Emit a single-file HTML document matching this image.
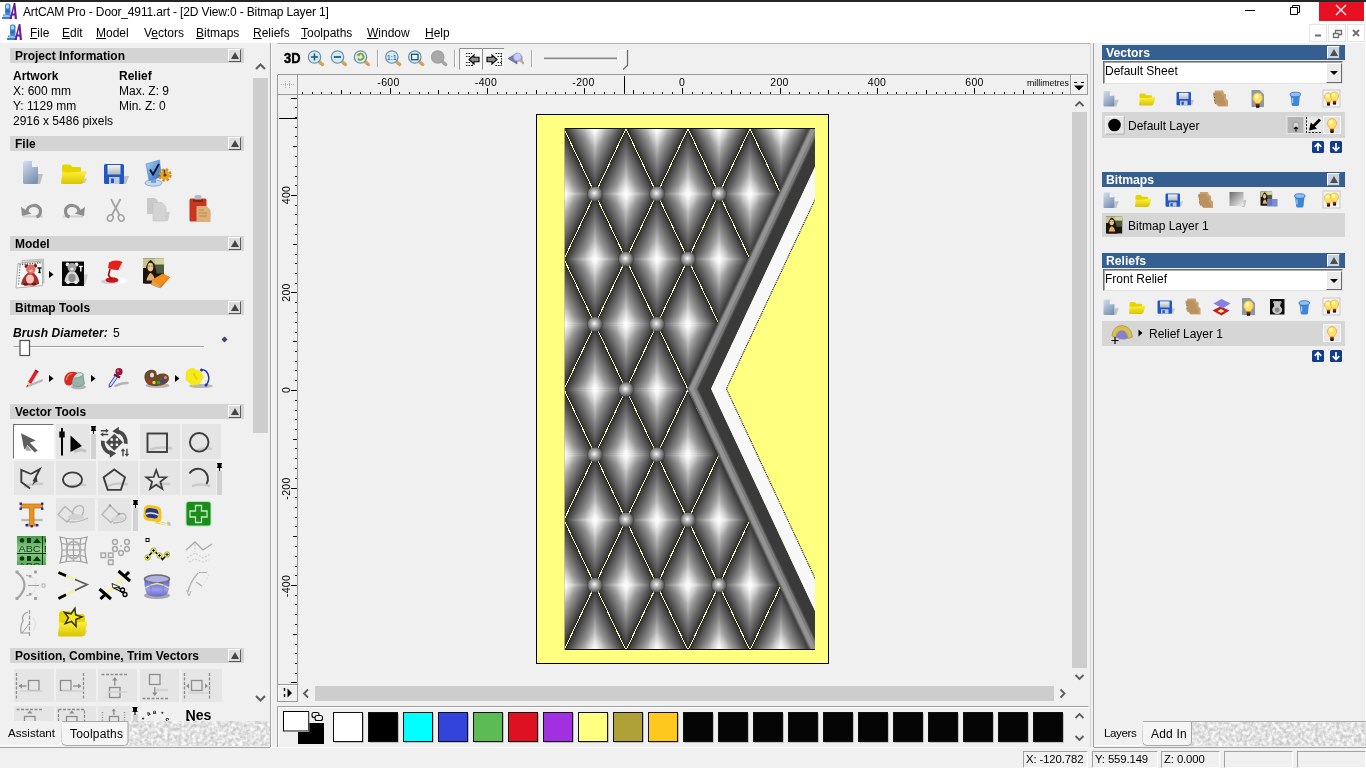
<!DOCTYPE html>
<html lang="en">
<head>
<meta charset="utf-8">
<title>ArtCAM Pro - Door_4911.art</title>
<style>
*{box-sizing:border-box;margin:0;padding:0}
html,body{width:1366px;height:768px;overflow:hidden;background:#f0f0f0}
body{position:relative;font-family:"Liberation Sans",sans-serif;font-size:12px;color:#000;line-height:1}
.a{position:absolute}
.t{position:absolute;white-space:nowrap;line-height:14px;will-change:transform}
.b{font-weight:bold}
svg{position:absolute;overflow:visible;will-change:transform}
.hdr,.rh,.dd,.sb{will-change:transform}
u{text-decoration-thickness:1px;text-underline-offset:1px}
.hdr{position:absolute;left:10px;width:234px;height:15px;background:#d4d4d4;font-weight:bold;font-size:12px;line-height:15px;padding:1px 0 0 5px;white-space:nowrap}
.hdr i{position:absolute;left:218px;top:1px;width:13px;height:13px;background:#dcdcdc;border:1px solid;border-color:#fff #5a5a5a #5a5a5a #fff}
.hdr i:after{content:"";position:absolute;left:1.500px;top:2px;border:4px solid transparent;border-top:0;border-bottom:7px solid #454545}
.c{position:absolute;background:#e5e5e5}
.rh{position:absolute;left:1102px;width:243px;height:15px;background:#365f91;color:#fff;font-weight:bold;font-size:12.200px;line-height:15px;padding:1px 0 0 4px;white-space:nowrap}
.rh i{position:absolute;left:225px;top:1px;width:13px;height:13px;background:#c9d3df;border:1px solid;border-color:#fff #5a6a80 #5a6a80 #fff}
.rh i:after{content:"";position:absolute;left:1.500px;top:2px;border:4px solid transparent;border-top:0;border-bottom:7px solid #4a5058}
.dd{position:absolute;left:1103px;width:240px;height:23px;background:#fff;border:1px solid;border-color:#6f6f6f #e2e2e2 #e2e2e2 #6f6f6f;box-shadow:inset 1px 1px 0 #a8a8a8;font-size:12px;line-height:14px;padding:2px 0 0 1px;white-space:nowrap}
.dd i{position:absolute;right:0px;top:1px;width:16px;height:20px;background:#ececec;border:1px solid;border-color:#fff #6a6a6a #6a6a6a #fff}
.dd i:after{content:"";position:absolute;left:3px;top:7px;border:4px solid transparent;border-bottom:0;border-top:4.500px solid #000}
.row{position:absolute;left:1102px;width:243px;background:#d6d6d6;font-size:12px;white-space:nowrap}
.sb{position:absolute;top:751px;height:17px;border:1px solid;border-color:#a2a2a2 #fff #fff #a2a2a2;font-size:11.300px;line-height:15px;padding-left:2px;white-space:nowrap;letter-spacing:-.1px}

</style>
</head>
<body>

<!-- p_base -->
<div class="a" style="left:0;top:0;width:1366px;height:43px;background:#fff"></div>
<div class="a" style="left:0;top:0;width:1366px;height:2px;background:#262626"></div>
<div class="t" style="left:23px;top:5px;font-size:12px;letter-spacing:-0.14px">ArtCAM Pro - Door_4911.art - [2D View:0 - Bitmap Layer 1]</div>
<svg style="left:2.3px;top:3.2px" width="15" height="16" viewBox="0 0 15 16">
<rect x="3" y="0.500" width="5.500" height="11.500" rx="2" fill="#3f86d6"/><rect x="4" y="1.500" width="3" height="4" rx="1.200" fill="#a8dcf4"/><rect x="4" y="6.500" width="3.500" height="3" fill="#2b6cc0"/>
<path d="M1 11.500h8.500v2H1zM0 14h10v2H0z" fill="#3a80d0"/><path d="M1.500 12.500h6" stroke="#9fd0f0" stroke-width=".8"/>
<path d="M7.600 16L11.800 0h1.600L15 16h-2.200l-.3 -3.500h-2.200L9.600 16z" fill="#6a1a90"/><path d="M10.700 10.500h1.700L12 5z" fill="#fff"/>
</svg><svg style="left:7.4px;top:24px" width="15" height="16" viewBox="0 0 15 16">
<rect x="3" y="0.500" width="5.500" height="11.500" rx="2" fill="#3f86d6"/><rect x="4" y="1.500" width="3" height="4" rx="1.200" fill="#a8dcf4"/><rect x="4" y="6.500" width="3.500" height="3" fill="#2b6cc0"/>
<path d="M1 11.500h8.500v2H1zM0 14h10v2H0z" fill="#3a80d0"/><path d="M1.500 12.500h6" stroke="#9fd0f0" stroke-width=".8"/>
<path d="M7.600 16L11.800 0h1.600L15 16h-2.200l-.3 -3.500h-2.200L9.600 16z" fill="#6a1a90"/><path d="M10.700 10.500h1.700L12 5z" fill="#fff"/>
</svg><div class="t" style="left:30px;top:26px"><u>F</u>ile</div>
<div class="t" style="left:62px;top:26px"><u>E</u>dit</div>
<div class="t" style="left:96px;top:26px"><u>M</u>odel</div>
<div class="t" style="left:144px;top:26px">V<u>e</u>ctors</div>
<div class="t" style="left:196px;top:26px"><u>B</u>itmaps</div>
<div class="t" style="left:253px;top:26px"><u>R</u>eliefs</div>
<div class="t" style="left:301px;top:26px"><u>T</u>oolpaths</div>
<div class="t" style="left:367px;top:26px"><u>W</u>indow</div>
<div class="t" style="left:425px;top:26px"><u>H</u>elp</div>
<div class="a" style="left:1319px;top:2px;width:45px;height:19px;background:#e81123"></div>
<svg style="left:1240px;top:2px" width="126" height="20" viewBox="0 0 126 20">
<path d="M5 8.5h10" stroke="#000" stroke-width="1"/>
<path d="M50.5 5.5h7v7h-7z M52.500 5.5v-2h7v7h-2" fill="none" stroke="#000" stroke-width="1"/>
<path d="M96 3l10 10M106 3l-10 10" stroke="#fff" stroke-width="1.2"/>
</svg>
<svg style="left:1309px;top:24px" width="56" height="18" viewBox="0 0 56 18">
<g fill="none" stroke="#e4e4e4"><rect x=".5" y=".5" width="17" height="17"/><rect x="19.5" y=".5" width="17" height="17"/><rect x="38.5" y=".5" width="17" height="17"/></g>
<path d="M6 11.500h6" stroke="#6d6d6d" stroke-width="2"/>
<path d="M24.500 9.500h5v4h-5zM26.500 9v-2.500h6v4h-2.500" fill="none" stroke="#6d6d6d" stroke-width="1.3"/>
<path d="M44 6l6 6M50 6l-6 6" stroke="#6d6d6d" stroke-width="1.8"/>
</svg>
<div class="a" style="left:1365px;top:43px;width:1px;height:725px;background:#fff"></div>
<!-- p_center -->
<div class="a" style="left:270px;top:43px;width:1px;height:704px;background:#a3a3a3"></div>
<div class="a" style="left:271px;top:43px;width:1px;height:704px;background:#fbfbfb"></div>
<div class="a" style="left:277px;top:43px;width:814px;height:1px;background:#b4b4b4"></div>
<div class="a" style="left:1090px;top:43px;width:1px;height:704px;background:#d4d4d4"></div>
<div class="a" style="left:1093px;top:43px;width:1px;height:704px;background:#a3a3a3"></div>
<div class="a" style="left:270px;top:747px;width:824px;height:1px;background:#fafafa"></div>
<svg style="left:0;top:0" width="1366" height="100" viewBox="0 0 1366 100"><text x="284" y="63" font-family="Liberation Sans,sans-serif" font-weight="bold" font-size="14.500" textLength="16.500" lengthAdjust="spacingAndGlyphs" stroke="#000" stroke-width=".4">3D</text><g transform="translate(314.5,57)">
<path d="M4.200 4.200L8 7.500" stroke="#d9a55a" stroke-width="3.4" stroke-linecap="round"/>
<path d="M5 6.800L7.500 8" stroke="#b98a4c" stroke-width="1" stroke-linecap="round" opacity=".5"/>
<circle r="6.200" fill="#d3ecf8" stroke="#6f93ad" stroke-width="1.300"/>
<path d="M-3.600 0h7.200M0 -3.600v7.200" stroke="#274f78" stroke-width="1.500"/></g><g transform="translate(337.5,57)">
<path d="M4.200 4.200L8 7.500" stroke="#d9a55a" stroke-width="3.4" stroke-linecap="round"/>
<path d="M5 6.800L7.500 8" stroke="#b98a4c" stroke-width="1" stroke-linecap="round" opacity=".5"/>
<circle r="6.200" fill="#d3ecf8" stroke="#6f93ad" stroke-width="1.300"/>
<path d="M-3.600 0h7.200" stroke="#274f78" stroke-width="1.700"/></g><g transform="translate(360.5,57)">
<path d="M4.200 4.200L8 7.500" stroke="#d9a55a" stroke-width="3.4" stroke-linecap="round"/>
<path d="M5 6.800L7.500 8" stroke="#b98a4c" stroke-width="1" stroke-linecap="round" opacity=".5"/>
<circle r="6.200" fill="#d3ecf8" stroke="#6f93ad" stroke-width="1.300"/>
<path d="M-2.500 1.500A3 3 0 1 0 -1.500 -2.800" fill="none" stroke="#8f9a18" stroke-width="1.700"/><path d="M-4.200 -2.200l3.400 -1.800v3.600z" fill="#8f9a18"/></g><path d="M377.500 50v17" stroke="#a8a8a8"/><path d="M378.500 50v17" stroke="#fff"/><g transform="translate(391.8,57)">
<path d="M4.200 4.200L8 7.500" stroke="#d9a55a" stroke-width="3.4" stroke-linecap="round"/>
<path d="M5 6.800L7.500 8" stroke="#b98a4c" stroke-width="1" stroke-linecap="round" opacity=".5"/>
<circle r="6.200" fill="#d3ecf8" stroke="#6f93ad" stroke-width="1.300"/>
<text x="0" y="2.500" text-anchor="middle" font-family="Liberation Sans,sans-serif" font-weight="bold" font-size="6.500" fill="#3f78a8">1:1</text></g><g transform="translate(414.8,57)">
<path d="M4.200 4.200L8 7.500" stroke="#d9a55a" stroke-width="3.4" stroke-linecap="round"/>
<path d="M5 6.800L7.500 8" stroke="#b98a4c" stroke-width="1" stroke-linecap="round" opacity=".5"/>
<circle r="6.200" fill="#d3ecf8" stroke="#6f93ad" stroke-width="1.300"/>
<rect x="-3.200" y="-2.700" width="6.400" height="5.400" fill="#eaf6fc" stroke="#274f78" stroke-width="1.300"/></g><g transform="translate(437.7,57)">
<path d="M4.200 4.200L8 7.500" stroke="#a5a5a5" stroke-width="3.4" stroke-linecap="round"/>
<path d="M5 6.800L7.500 8" stroke="#999" stroke-width="1" stroke-linecap="round" opacity=".5"/>
<circle r="6.200" fill="#a9a9a9" stroke="#a0a0a0" stroke-width="1.300"/>
</g><path d="M454.500 50v17" stroke="#a8a8a8"/><path d="M455.500 50v17" stroke="#fff"/><rect x="459.500" y="48.500" width="22.500" height="21" fill="#f7f7f7"/><path d="M459.500 69.500v-21h22.500" fill="none" stroke="#909090"/><rect x="482.500" y="48.500" width="21.500" height="21" fill="#f7f7f7"/><path d="M482.500 69.500v-21h21.500" fill="none" stroke="#909090"/><g stroke="#222" stroke-width="1" stroke-dasharray="1.500 1" fill="none"><path d="M466 53.500h6M466 56.500h4M466 62.500h4M466 65.500h6M472.500 62v4.500"/></g>
<path d="M469 59.500l5 -4.500v2.300h5v4.400h-5v2.300z" fill="#8c8c8c" stroke="#000" stroke-width="1.100"/>
<g stroke="#222" stroke-width="1" stroke-dasharray="1.500 1" fill="none"><path d="M495.500 53.500h6M497.500 56.500h4M497.500 62.500h4M495.500 65.500h6M501.500 53v13"/></g>
<path d="M497 59.500l-5 -4.500v2.300h-5v4.400h5v2.300z" fill="#8c8c8c" stroke="#000" stroke-width="1.100"/>
<path d="M508 58.500l9 -5.500v3h5v5h-5v3z" fill="#7474b8" stroke="#5c5ca0" stroke-width=".6"/>
<circle cx="517.500" cy="57" r="4" fill="#c8d4f6" stroke="#98a8d8" stroke-width="1" opacity=".95"/>
<path d="M520.500 60l2.500 3" stroke="#c8a888" stroke-width="2.400" stroke-linecap="round"/>
<path d="M531.500 50v17" stroke="#a8a8a8"/><path d="M532.500 50v17" stroke="#fff"/><path d="M544 58.500h73" stroke="#8a8a8a" stroke-width="2"/><path d="M544 60h73" stroke="#fdfdfd" stroke-width="1"/><path d="M618.500 50.500h8.500v15l-4 4l-4.500 -4z" fill="#f2f2f2" stroke="#fff" stroke-width="1"/><path d="M627.500 50v15.500l-4.500 4" fill="none" stroke="#6a6a6a" stroke-width="1.300"/></svg>
<svg style="left:0;top:0" width="1366" height="768" viewBox="0 0 1366 768" shape-rendering="crispEdges"><g stroke="#9a9a9a" fill="none"><path d="M277.500 74.500h810.500M277.500 94.500h810.500M277.500 74.500v627.500M297.500 74.500v627.500M277.500 684.500h20"/></g><g stroke="#b0b0b0" stroke-dasharray="1 1"><path d="M281 84.500h13M285.500 81v7M289.500 81v7"/></g><path d="M302.5 94v-2M312.5 94v-2M321.5 94v-2M331.5 94v-2M341.5 94v-4M350.5 94v-2M360.5 94v-2M370.5 94v-2M380.5 94v-2M390.5 94v-6M399.5 94v-2M409.5 94v-2M419.5 94v-2M428.5 94v-2M438.5 94v-4M448.5 94v-2M458.5 94v-2M468.5 94v-2M477.5 94v-2M487.5 94v-6M497.5 94v-2M506.5 94v-2M516.5 94v-2M526.5 94v-2M536.5 94v-4M546.5 94v-2M555.5 94v-2M565.5 94v-2M575.5 94v-2M584.5 94v-6M594.5 94v-2M604.5 94v-2M614.5 94v-2M624.5 94v-2M633.5 94v-4M643.5 94v-2M653.5 94v-2M662.5 94v-2M672.5 94v-2M682.5 94v-6M692.5 94v-2M702.5 94v-2M711.5 94v-2M721.5 94v-2M731.5 94v-4M740.5 94v-2M750.5 94v-2M760.5 94v-2M770.5 94v-2M780.5 94v-6M789.5 94v-2M799.5 94v-2M809.5 94v-2M818.5 94v-2M828.5 94v-4M838.5 94v-2M848.5 94v-2M858.5 94v-2M867.5 94v-2M877.5 94v-6M887.5 94v-2M896.5 94v-2M906.5 94v-2M916.5 94v-2M926.5 94v-4M936.5 94v-2M945.5 94v-2M955.5 94v-2M965.5 94v-2M974.5 94v-6M984.5 94v-2M994.5 94v-2M1004.5 94v-2M1014.5 94v-2M1023.5 94v-4M1033.5 94v-2M1043.5 94v-2M1052.5 94v-2M1062.5 94v-2M297 682.5h-6M297 673.5h-2M297 663.5h-2M297 653.5h-2M297 644.5h-2M297 634.5h-4M297 624.5h-2M297 614.5h-2M297 604.5h-2M297 595.5h-2M297 585.5h-6M297 575.5h-2M297 566.5h-2M297 556.5h-2M297 546.5h-2M297 536.5h-4M297 526.5h-2M297 517.5h-2M297 507.5h-2M297 497.5h-2M297 488.5h-6M297 478.5h-2M297 468.5h-2M297 458.5h-2M297 448.5h-2M297 439.5h-4M297 429.5h-2M297 419.5h-2M297 410.5h-2M297 400.5h-2M297 390.5h-6M297 380.5h-2M297 370.5h-2M297 361.5h-2M297 351.5h-2M297 341.5h-4M297 332.5h-2M297 322.5h-2M297 312.5h-2M297 302.5h-2M297 292.5h-6M297 283.5h-2M297 273.5h-2M297 263.5h-2M297 254.5h-2M297 244.5h-4M297 234.5h-2M297 224.5h-2M297 214.5h-2M297 205.5h-2M297 195.5h-6M297 185.5h-2M297 176.5h-2M297 166.5h-2M297 156.5h-2M297 146.5h-4M297 136.5h-2M297 127.5h-2M297 117.5h-2M297 107.5h-2M297 98.5h-6" stroke="#000"/><path d="M624.500 76v18" stroke="#000"/><path d="M279 118.500h18" stroke="#000"/></svg>
<svg style="left:0;top:0" width="1366" height="768" viewBox="0 0 1366 768"><g font-family="Liberation Sans,sans-serif" font-size="10.500" letter-spacing=".35" text-anchor="middle" fill="#000"><text x="388.5" y="86">-600</text><text x="486.0" y="86">-400</text><text x="583.5" y="86">-200</text><text x="682.0" y="86">0</text><text x="779.5" y="86">200</text><text x="877.0" y="86">400</text><text x="974.5" y="86">600</text><text transform="translate(289.500,195.0) rotate(-90)">400</text><text transform="translate(289.500,292.5) rotate(-90)">200</text><text transform="translate(289.500,390.0) rotate(-90)">0</text><text transform="translate(289.500,488.5) rotate(-90)">-200</text><text transform="translate(289.500,586.0) rotate(-90)">-400</text></g><text x="1027" y="86" font-family="Liberation Sans,sans-serif" font-size="9.500" textLength="42" lengthAdjust="spacingAndGlyphs">millimetres</text><rect x="1070.500" y="74.500" width="17" height="20" fill="#f0f0f0" stroke="#9a9a9a"/><path d="M1071.500 93.500v-18h15" fill="none" stroke="#fff"/><path d="M1074 82.500h3M1081 82.500h3" stroke="#000"/><path d="M1074 85.500h10l-5 5z" fill="#000"/><rect x="277.500" y="684.500" width="20" height="17" fill="#f0f0f0" stroke="#9a9a9a"/><path d="M278.500 700.500v-15h18" fill="none" stroke="#fff"/><path d="M284.500 688v3M284.500 694v3" stroke="#000" stroke-width="1.400"/><path d="M287.500 688.500v9l4.500 -4.500z" fill="#000"/><rect x="1072" y="112" width="15" height="556" fill="#cdcdcd"/><path d="M1075.500 106l4 -4l4 4" fill="none" stroke="#5d5d5d" stroke-width="1.800"/><path d="M1075.500 675l4 4l4 -4" fill="none" stroke="#5d5d5d" stroke-width="1.800"/><rect x="315" y="686" width="739" height="15" fill="#cdcdcd"/><path d="M308 689.500l-4 4l4 4" fill="none" stroke="#5d5d5d" stroke-width="1.800"/><path d="M1060.500 689.500l4 4l-4 4" fill="none" stroke="#5d5d5d" stroke-width="1.800"/><path d="M277.500 747v-40.500h811" fill="none" stroke="#a0a0a0"/><path d="M278.500 747v-39.500h810" fill="none" stroke="#fff"/><path d="M1075.500 718l4 -4l4 4" fill="none" stroke="#5d5d5d" stroke-width="1.800"/><path d="M1075.500 736l4 4l4 -4" fill="none" stroke="#5d5d5d" stroke-width="1.800"/><rect x="298.500" y="723.500" width="25" height="20" fill="#000" stroke="#000"/><rect x="283.500" y="711.500" width="25" height="19.500" fill="#fff" stroke="#000"/><path d="M284 731.500h25v-19.500" fill="none" stroke="#8a8a8a"/><rect x="312" y="712.500" width="7" height="5" rx="2" fill="none" stroke="#000" stroke-width="1.100"/><rect x="315" y="715.500" width="7.500" height="5" rx="2" fill="#f0f0f0" stroke="#000" stroke-width="1.100"/><rect x="334.5" y="713.500" width="29" height="29" fill="#8e8e8e"/><rect x="333.5" y="712.500" width="29" height="29" fill="#ffffff" stroke="#111"/><rect x="369.5" y="713.500" width="29" height="29" fill="#8e8e8e"/><rect x="368.5" y="712.500" width="29" height="29" fill="#000000" stroke="#111"/><rect x="404.5" y="713.500" width="29" height="29" fill="#8e8e8e"/><rect x="403.5" y="712.500" width="29" height="29" fill="#00ffff" stroke="#111"/><rect x="439.5" y="713.500" width="29" height="29" fill="#8e8e8e"/><rect x="438.5" y="712.500" width="29" height="29" fill="#3344dd" stroke="#111"/><rect x="474.5" y="713.500" width="29" height="29" fill="#8e8e8e"/><rect x="473.5" y="712.500" width="29" height="29" fill="#5cbb55" stroke="#111"/><rect x="509.5" y="713.500" width="29" height="29" fill="#8e8e8e"/><rect x="508.5" y="712.500" width="29" height="29" fill="#dd1122" stroke="#111"/><rect x="544.5" y="713.500" width="29" height="29" fill="#8e8e8e"/><rect x="543.5" y="712.500" width="29" height="29" fill="#a030e0" stroke="#111"/><rect x="579.5" y="713.500" width="29" height="29" fill="#8e8e8e"/><rect x="578.5" y="712.500" width="29" height="29" fill="#ffff80" stroke="#111"/><rect x="614.5" y="713.500" width="29" height="29" fill="#8e8e8e"/><rect x="613.5" y="712.500" width="29" height="29" fill="#b0a038" stroke="#111"/><rect x="649.5" y="713.500" width="29" height="29" fill="#8e8e8e"/><rect x="648.5" y="712.500" width="29" height="29" fill="#ffc81e" stroke="#111"/><rect x="684.5" y="713.500" width="29" height="29" fill="#8e8e8e"/><rect x="683.5" y="712.500" width="29" height="29" fill="#050505" stroke="#111"/><rect x="719.5" y="713.500" width="29" height="29" fill="#8e8e8e"/><rect x="718.5" y="712.500" width="29" height="29" fill="#050505" stroke="#111"/><rect x="754.5" y="713.500" width="29" height="29" fill="#8e8e8e"/><rect x="753.5" y="712.500" width="29" height="29" fill="#050505" stroke="#111"/><rect x="789.5" y="713.500" width="29" height="29" fill="#8e8e8e"/><rect x="788.5" y="712.500" width="29" height="29" fill="#050505" stroke="#111"/><rect x="824.5" y="713.500" width="29" height="29" fill="#8e8e8e"/><rect x="823.5" y="712.500" width="29" height="29" fill="#050505" stroke="#111"/><rect x="859.5" y="713.500" width="29" height="29" fill="#8e8e8e"/><rect x="858.5" y="712.500" width="29" height="29" fill="#050505" stroke="#111"/><rect x="894.5" y="713.500" width="29" height="29" fill="#8e8e8e"/><rect x="893.5" y="712.500" width="29" height="29" fill="#050505" stroke="#111"/><rect x="929.5" y="713.500" width="29" height="29" fill="#8e8e8e"/><rect x="928.5" y="712.500" width="29" height="29" fill="#050505" stroke="#111"/><rect x="964.5" y="713.500" width="29" height="29" fill="#8e8e8e"/><rect x="963.5" y="712.500" width="29" height="29" fill="#050505" stroke="#111"/><rect x="999.5" y="713.500" width="29" height="29" fill="#8e8e8e"/><rect x="998.5" y="712.500" width="29" height="29" fill="#050505" stroke="#111"/><rect x="1034.5" y="713.500" width="29" height="29" fill="#8e8e8e"/><rect x="1033.5" y="712.500" width="29" height="29" fill="#050505" stroke="#111"/></svg>

<!-- p_canvas -->
<svg style="left:0;top:0" width="1366" height="768" viewBox="0 0 1366 768">
<defs>
<linearGradient id="q0" gradientUnits="userSpaceOnUse" x1="0" y1="0" x2="25.29" y2="-12.02"><stop offset="0" stop-color="#f4f4f4"/><stop offset=".5" stop-color="#8c8c8c"/><stop offset=".85" stop-color="#4a4a4a"/><stop offset="1" stop-color="#2a2a2a"/></linearGradient>
<linearGradient id="q1" gradientUnits="userSpaceOnUse" x1="0" y1="0" x2="25.29" y2="12.02"><stop offset="0" stop-color="#f4f4f4"/><stop offset=".5" stop-color="#8c8c8c"/><stop offset=".85" stop-color="#4a4a4a"/><stop offset="1" stop-color="#2a2a2a"/></linearGradient>
<linearGradient id="q2" gradientUnits="userSpaceOnUse" x1="0" y1="0" x2="-25.29" y2="12.02"><stop offset="0" stop-color="#f4f4f4"/><stop offset=".5" stop-color="#8c8c8c"/><stop offset=".85" stop-color="#4a4a4a"/><stop offset="1" stop-color="#2a2a2a"/></linearGradient>
<linearGradient id="q3" gradientUnits="userSpaceOnUse" x1="0" y1="0" x2="-25.29" y2="-12.02"><stop offset="0" stop-color="#f4f4f4"/><stop offset=".5" stop-color="#8c8c8c"/><stop offset=".85" stop-color="#4a4a4a"/><stop offset="1" stop-color="#2a2a2a"/></linearGradient>
<radialGradient id="gl"><stop offset="0" stop-color="#fff" stop-opacity=".9"/><stop offset=".4" stop-color="#fff" stop-opacity=".3"/><stop offset="1" stop-color="#fff" stop-opacity="0"/></radialGradient>
<radialGradient id="gs"><stop offset="0" stop-color="#fff" stop-opacity=".5"/><stop offset=".5" stop-color="#fff" stop-opacity=".22"/><stop offset="1" stop-color="#fff" stop-opacity="0"/></radialGradient>
<radialGradient id="ball" cx=".46" cy=".45" r=".58"><stop offset="0" stop-color="#fafafa"/><stop offset=".28" stop-color="#c4c4c4"/><stop offset=".65" stop-color="#858585"/><stop offset="1" stop-color="#4a4a4a"/></radialGradient>
<g id="dia">
<path d="M0 0L0 -65.25L31.0 0z" fill="url(#q0)"/><path d="M0 0L31.0 0L0 65.25z" fill="url(#q1)"/><path d="M0 0L0 65.25L-31.0 0z" fill="url(#q2)"/><path d="M0 0L-31.0 0L0 -65.25z" fill="url(#q3)"/>
<ellipse rx="10" ry="18" fill="url(#gl)"/><ellipse rx="27" ry="10" fill="url(#gl)" opacity=".38"/><ellipse rx="2.500" ry="38" fill="url(#gs)" opacity=".4"/><ellipse rx="28" ry="2.500" fill="url(#gs)" opacity=".6"/>
</g>
<clipPath id="pc"><path d="M564.500 128H814.1L692 388.8L814.1 650H564.500z"/></clipPath>
<clipPath id="rc"><rect x="564.500" y="128" width="250.500" height="522"/></clipPath>
<linearGradient id="bev" x1="0" x2="1" y1="0" y2="0"><stop offset="0" stop-color="#4a4a4a"/><stop offset=".3" stop-color="#8e8e8e"/><stop offset=".65" stop-color="#7a7a7a"/><stop offset="1" stop-color="#585858"/></linearGradient>
</defs>
<rect x="536.500" y="114.500" width="292" height="549" fill="#ffff80" stroke="#000" shape-rendering="crispEdges"/>
<g clip-path="url(#rc)">
<path d="M819.1 128L697 388.8L819.2 650H833.4L711.2 388.8L833.3 128z" fill="#3a3a3a"/>
<path d="M833.1 128L711 388.8L833.2 650H848.6L726.4 388.8L848.5 128z" fill="#f8f8f8"/>
<path d="M848.5 128L726.400 388.8L848.6 650" fill="none" stroke="#111" stroke-width="1.200" stroke-dasharray="1 1"/>
<g clip-path="url(#pc)">
<rect x="564" y="128" width="252" height="522" fill="#333"/>
<use href="#dia" x="595" y="128.7"/><use href="#dia" x="657" y="128.7"/><use href="#dia" x="719" y="128.7"/><use href="#dia" x="781" y="128.7"/><use href="#dia" x="564" y="193.9"/><use href="#dia" x="626" y="193.9"/><use href="#dia" x="688" y="193.9"/><use href="#dia" x="750" y="193.9"/><use href="#dia" x="812" y="193.9"/><use href="#dia" x="595" y="259.1"/><use href="#dia" x="657" y="259.1"/><use href="#dia" x="719" y="259.1"/><use href="#dia" x="781" y="259.1"/><use href="#dia" x="564" y="324.3"/><use href="#dia" x="626" y="324.3"/><use href="#dia" x="688" y="324.3"/><use href="#dia" x="750" y="324.3"/><use href="#dia" x="595" y="389.5"/><use href="#dia" x="657" y="389.5"/><use href="#dia" x="719" y="389.5"/><use href="#dia" x="564" y="454.7"/><use href="#dia" x="626" y="454.7"/><use href="#dia" x="688" y="454.7"/><use href="#dia" x="750" y="454.7"/><use href="#dia" x="595" y="519.9"/><use href="#dia" x="657" y="519.9"/><use href="#dia" x="719" y="519.9"/><use href="#dia" x="781" y="519.9"/><use href="#dia" x="564" y="585.1"/><use href="#dia" x="626" y="585.1"/><use href="#dia" x="688" y="585.1"/><use href="#dia" x="750" y="585.1"/><use href="#dia" x="812" y="585.1"/><use href="#dia" x="595" y="650.3"/><use href="#dia" x="657" y="650.3"/><use href="#dia" x="719" y="650.3"/><use href="#dia" x="781" y="650.3"/>
<path d="M316 128.7L564 650.3M564 128.7L316 650.3M378 128.7L626 650.3M626 128.7L378 650.3M440 128.7L688 650.3M688 128.7L440 650.3M502 128.7L750 650.3M750 128.7L502 650.3M564 128.7L812 650.3M812 128.7L564 650.3M626 128.7L874 650.3M874 128.7L626 650.3M688 128.7L936 650.3M936 128.7L688 650.3M750 128.7L998 650.3M998 128.7L750 650.3M812 128.7L1060 650.3M1060 128.7L812 650.3" stroke="#1c1c1c" stroke-width="2.400" fill="none" opacity=".35"/>
<path d="M316 128.7L564 650.3M564 128.7L316 650.3M378 128.7L626 650.3M626 128.7L378 650.3M440 128.7L688 650.3M688 128.7L440 650.3M502 128.7L750 650.3M750 128.7L502 650.3M564 128.7L812 650.3M812 128.7L564 650.3M626 128.7L874 650.3M874 128.7L626 650.3M688 128.7L936 650.3M936 128.7L688 650.3M750 128.7L998 650.3M998 128.7L750 650.3M812 128.7L1060 650.3M1060 128.7L812 650.3" stroke="#ffffc0" stroke-width="1" fill="none" shape-rendering="crispEdges"/>
<circle cx="595" cy="193.9" r="8.300" fill="#3a3a3a" opacity=".4"/><circle cx="595" cy="193.9" r="7.200" fill="url(#ball)"/><circle cx="657" cy="193.9" r="8.300" fill="#3a3a3a" opacity=".4"/><circle cx="657" cy="193.9" r="7.200" fill="url(#ball)"/><circle cx="719" cy="193.9" r="8.300" fill="#3a3a3a" opacity=".4"/><circle cx="719" cy="193.9" r="7.200" fill="url(#ball)"/><circle cx="626" cy="259.1" r="8.300" fill="#3a3a3a" opacity=".4"/><circle cx="626" cy="259.1" r="7.200" fill="url(#ball)"/><circle cx="688" cy="259.1" r="8.300" fill="#3a3a3a" opacity=".4"/><circle cx="688" cy="259.1" r="7.200" fill="url(#ball)"/><circle cx="595" cy="324.3" r="8.300" fill="#3a3a3a" opacity=".4"/><circle cx="595" cy="324.3" r="7.200" fill="url(#ball)"/><circle cx="657" cy="324.3" r="8.300" fill="#3a3a3a" opacity=".4"/><circle cx="657" cy="324.3" r="7.200" fill="url(#ball)"/><circle cx="626" cy="389.5" r="8.300" fill="#3a3a3a" opacity=".4"/><circle cx="626" cy="389.5" r="7.200" fill="url(#ball)"/><circle cx="595" cy="454.7" r="8.300" fill="#3a3a3a" opacity=".4"/><circle cx="595" cy="454.7" r="7.200" fill="url(#ball)"/><circle cx="657" cy="454.7" r="8.300" fill="#3a3a3a" opacity=".4"/><circle cx="657" cy="454.7" r="7.200" fill="url(#ball)"/><circle cx="626" cy="519.9" r="8.300" fill="#3a3a3a" opacity=".4"/><circle cx="626" cy="519.9" r="7.200" fill="url(#ball)"/><circle cx="688" cy="519.9" r="8.300" fill="#3a3a3a" opacity=".4"/><circle cx="688" cy="519.9" r="7.200" fill="url(#ball)"/><circle cx="595" cy="585.1" r="8.300" fill="#3a3a3a" opacity=".4"/><circle cx="595" cy="585.1" r="7.200" fill="url(#ball)"/><circle cx="657" cy="585.1" r="8.300" fill="#3a3a3a" opacity=".4"/><circle cx="657" cy="585.1" r="7.200" fill="url(#ball)"/><circle cx="719" cy="585.1" r="8.300" fill="#3a3a3a" opacity=".4"/><circle cx="719" cy="585.1" r="7.200" fill="url(#ball)"/>
</g>
<path d="M818.3 120L692.5 388.8L818.5 658" fill="none" stroke="#565656" stroke-width="10" stroke-linejoin="miter"/>
<path d="M818.3 120L692.5 388.8L818.5 658" fill="none" stroke="#7c7c7c" stroke-width="7.500" stroke-linejoin="miter"/>
<path d="M817.5 120L691.7 388.8L817.7 658" fill="none" stroke="#949494" stroke-width="4" stroke-linejoin="miter"/>
</g>
<path d="M564.500 128.500H815" stroke="#111" shape-rendering="crispEdges"/><path d="M564.500 649.500H815" stroke="#111" shape-rendering="crispEdges"/>
</svg>

<!-- p_left -->
<div class="hdr" style="top:48px">Project Information<i></i></div>
<div class="hdr" style="top:136px">File<i></i></div>
<div class="hdr" style="top:236px">Model<i></i></div>
<div class="hdr" style="top:300px">Bitmap Tools<i></i></div>
<div class="hdr" style="top:404px">Vector Tools<i></i></div>
<div class="hdr" style="top:648px">Position, Combine, Trim Vectors<i></i></div>
<div class="t b" style="left:13px;top:69px">Artwork</div><div class="t b" style="left:119px;top:69px">Relief</div>
<div class="t" style="left:13px;top:84px">X: 600 mm</div><div class="t" style="left:119px;top:84px">Max. Z: 9</div>
<div class="t" style="left:13px;top:99px">Y: 1129 mm</div><div class="t" style="left:119px;top:99px">Min. Z: 0</div>
<div class="t" style="left:13px;top:114px">2916 x 5486 pixels</div>
<div class="t b" style="left:13px;top:326px;font-style:italic;letter-spacing:.1px">Brush Diameter:</div><div class="t" style="left:113px;top:326px">5</div>
<div class="a" style="left:253px;top:78px;width:15px;height:355px;background:#cdcdcd"></div>
<svg style="left:253px;top:60px" width="15" height="650" viewBox="0 0 15 650"><path d="M3 9l4.500 -4.500l4.500 4.500" fill="none" stroke="#5d5d5d" stroke-width="2"/><path d="M3 636l4.500 4.500l4.500 -4.500" fill="none" stroke="#5d5d5d" stroke-width="2"/></svg>
<div class="c" style="left:56px;top:424px;width:34px;height:35px"></div><div class="c" style="left:140px;top:424px;width:40px;height:35px"></div><div class="c" style="left:182px;top:424px;width:39px;height:35px"></div><div class="c" style="left:14px;top:461px;width:40px;height:34px"></div><div class="c" style="left:56px;top:461px;width:40px;height:34px"></div><div class="c" style="left:98px;top:461px;width:40px;height:34px"></div><div class="c" style="left:140px;top:461px;width:40px;height:34px"></div><div class="c" style="left:182px;top:461px;width:34px;height:34px"></div><div class="c" style="left:56px;top:498px;width:39px;height:33px"></div><div class="c" style="left:98px;top:498px;width:33px;height:33px"></div><div class="c" style="left:14px;top:669px;width:40px;height:33px"></div><div class="c" style="left:56px;top:669px;width:40px;height:33px"></div><div class="c" style="left:98px;top:669px;width:39px;height:33px"></div><div class="c" style="left:140px;top:669px;width:39px;height:33px"></div><div class="c" style="left:182px;top:669px;width:40px;height:33px"></div><div class="c" style="left:14px;top:706px;width:40px;height:15px"></div><div class="c" style="left:56px;top:706px;width:40px;height:15px"></div><div class="c" style="left:98px;top:706px;width:33px;height:15px"></div><div class="a" style="left:91px;top:434px;width:5px;height:25px;background:#d2d2d2"></div><div class="a" style="left:217px;top:471px;width:5px;height:24px;background:#d2d2d2"></div><div class="a" style="left:133px;top:508px;width:5px;height:23px;background:#d2d2d2"></div><div class="a" style="left:132.5px;top:714px;width:5px;height:7px;background:#d2d2d2"></div><div class="a" style="left:13px;top:424px;width:41px;height:35px;background:#fff;border:1px solid;border-color:#707070 #fff #fff #707070"></div>
<svg style="left:0;top:0" width="272" height="721" viewBox="0 0 272 721">
<defs><linearGradient id="lgPage" x1="0" y1="0" x2=".6" y2="1"><stop offset="0" stop-color="#d6e0ee"/><stop offset="1" stop-color="#7b93b3"/></linearGradient>
<linearGradient id="lgLbl" x1="0" y1="0" x2="0" y2="1"><stop offset="0" stop-color="#f6f6f6"/><stop offset="1" stop-color="#b5b5b5"/></linearGradient>
<linearGradient id="lgMon" x1="0" y1="0" x2="1" y2="1"><stop offset="0" stop-color="#a8d8f8"/><stop offset="1" stop-color="#2560c0"/></linearGradient>
<linearGradient id="lgABC" x1="0" y1="0" x2="0" y2="1"><stop offset="0" stop-color="#4a9a4a"/><stop offset=".5" stop-color="#8fcc8f"/><stop offset="1" stop-color="#58a858"/></linearGradient>
<linearGradient id="lgBowl" x1="0" y1="0" x2="0" y2="1"><stop offset="0" stop-color="#5a5ad0"/><stop offset=".6" stop-color="#9a9af0"/><stop offset="1" stop-color="#6a6ac8"/></linearGradient>
<linearGradient id="lgFold" x1="0" y1="0" x2="0" y2="1"><stop offset="0" stop-color="#fff040"/><stop offset="1" stop-color="#d8c400"/></linearGradient>
</defs>
<g transform="translate(23,161)" ><path d="M15 13h5l-3 10h-5z" fill="#a8a8a8" opacity=".7"/><path d="M0 1.500Q0 0 1.500 0H9L15 6V21.500Q15 23 13.500 23H1.500Q0 23 0 21.500z" fill="url(#lgPage)"/><path d="M9 0V6H15z" fill="#f2f6fb"/></g>
<g transform="translate(61,163)" ><path d="M20 17l6 -2l-2 5h-6z" fill="#b0b0b0" opacity=".6"/><path d="M1 4Q1 1.500 3 1.500H9L11.500 4H18.500Q20 4 20 5.500V10H1z" fill="#e6d400"/><path d="M0 20L1.500 8.500Q4 10 9 9.500L25.500 8L22.500 18.500Q22 21 19.500 21H1.500Q0 21 0 20z" fill="url(#lgFold)"/></g>
<g transform="translate(104,164)" ><path d="M20 12h5l-3 8h-3z" fill="#a8a8a8" opacity=".7"/><rect width="20" height="20" rx="1.500" fill="#2157c4"/><rect x="3.500" y="1" width="13" height="9.500" fill="url(#lgLbl)"/><rect x="5" y="13" width="10.500" height="7" fill="#bfcadc"/><rect x="7" y="14.500" width="3" height="4.500" fill="#2157c4"/></g>
<g transform="translate(144,160)" ><ellipse cx="9.500" cy="23" rx="8.500" ry="3.200" fill="#c4d8f0" stroke="#7a98c8" stroke-width=".8"/><path d="M7 17h5v6h-5z" fill="#7f9fd0"/><path d="M2 4L15.500 0L17.500 17L5 20.500z" fill="url(#lgMon)" stroke="#5a88c8" stroke-width=".6"/><path d="M6 9.500l3 5l6 -10.500" fill="none" stroke="#101830" stroke-width="1.900"/><circle cx="21" cy="15" r="5" fill="none" stroke="#cf8e12" stroke-width="3.400" stroke-dasharray="2.300 1.630"/><circle cx="21" cy="15" r="4.600" fill="#e6a520"/><circle cx="21" cy="15" r="1.600" fill="#5a3a08"/><path d="M20.500 9.500v4" stroke="#5a3a08" stroke-width="1.300"/></g>
<g transform="translate(21,202)" ><path d="M2 14.500h20" stroke="#cfcfcf" stroke-width="2"/><path d="M6 10C5.500 2 19 1 19.500 9C19.500 12.500 17 14.500 15.500 15" fill="none" stroke="#8e8e8e" stroke-width="3.200"/><path d="M0 5L1 14L10.500 11.500z" fill="#8e8e8e"/></g>
<g transform="translate(63,202)" ><path d="M0 14.500h20" stroke="#cfcfcf" stroke-width="2"/><path d="M16 10C16.500 2 3 1 2.500 9C2.500 12.500 5 14.500 6.500 15" fill="none" stroke="#8e8e8e" stroke-width="3.200"/><path d="M22 5L21 14L11.500 11.500z" fill="#8e8e8e"/></g>
<g transform="translate(106.5,199)" ><path d="M4.500 0L13 16M14 0L5.500 16" stroke="#a2a2a2" stroke-width="1.700" fill="none"/><ellipse cx="3.800" cy="19" rx="2.800" ry="3.300" transform="rotate(25 3.800 19)" fill="none" stroke="#a2a2a2" stroke-width="1.500"/><ellipse cx="14.700" cy="19" rx="2.800" ry="3.300" transform="rotate(-25 14.700 19)" fill="none" stroke="#a2a2a2" stroke-width="1.500"/></g>
<g transform="translate(147,198)" ><path d="M19 14h4l-2 9h-4z" fill="#d0d0d0"/><path d="M0 0h8l3 3v13H0z" fill="#c9c9c9"/><path d="M6 4.500h9l4 4V23H6z" fill="#d3d3d3" stroke="#c2c2c2" stroke-width=".6"/></g>
<g transform="translate(189.5,195)" ><path d="M17 18h5l-2 9h-4z" fill="#b5b5b5" opacity=".6"/><rect x="0" y="3.500" width="17" height="23" rx="1.500" fill="#c7361f"/><rect x="5" y="0" width="7" height="5.500" rx="2" fill="#b8b8cc"/><rect x="3.500" y="4.500" width="10" height="2.500" fill="#8c2412"/><path d="M7 11h10l4 4v12H7z" fill="#deb077"/><path d="M9.500 15h5M9.500 18h8M9.500 21h8" stroke="#b98a50" stroke-width="1"/></g>
<g transform="translate(15.5,259)" ><path d="M6.500 1.500L28 0L28.500 24L8 28.500z" fill="#d0d0d0" stroke="#aaa" stroke-width=".6"/><path d="M2.500 4.500L26.500 2L27 26.500L.5 29z" fill="#fff" stroke="#a0a0a0" stroke-width=".8"/><path d="M4 5.800L25.500 3.600" stroke="#555" stroke-width="1.500" stroke-dasharray="1.200 1.300"/><path d="M4.500 7.500L3 26" stroke="#666" stroke-width="1.300" stroke-dasharray="1.200 1.600"/><circle cx="11" cy="7.200" r="1.900" fill="#7c1c1c"/><circle cx="19.800" cy="6.800" r="1.900" fill="#7c1c1c"/><path d="M15 12.500C9 15 6 21 5.500 25.500L12 26.500H19L23.500 25C23.500 20 21 14.500 15 12.500z" fill="#a8302a"/><circle cx="15.300" cy="10.300" r="4.700" fill="#e06c64"/><ellipse cx="15.300" cy="11.800" rx="2" ry="1.400" fill="#f4a8a0"/><ellipse cx="14.500" cy="20" rx="4" ry="4.600" fill="#f6c4bc"/><ellipse cx="10" cy="25.300" rx="2.200" ry="1.500" fill="#701818"/><ellipse cx="18.500" cy="25" rx="2.200" ry="1.500" fill="#701818"/><path d="M22 9h4M24 9v4.500M22.800 13.500h2.400" stroke="#111" stroke-width="1.500"/></g>
<path d="M49 271.0l4.500 3.500l-4.500 3.500z" fill="#000"/><g transform="translate(62,261.5)" ><path d="M22 13h4l-3 10h-3z" fill="#b8b8b8" opacity=".7"/><rect width="22" height="24.500" fill="#060606"/><circle cx="5.500" cy="3" r="1.900" fill="#ededed"/><circle cx="14.500" cy="3" r="1.900" fill="#ededed"/><path d="M10 8.500C5 10.500 3 16 2.500 20L7 21.500H13L17.500 20C17 16 15 10.500 10 8.500z" fill="#d6d6d6"/><circle cx="10" cy="6" r="4.500" fill="#a2a2a2"/><ellipse cx="10" cy="7.500" rx="1.700" ry="1.200" fill="#e8e8e8"/><ellipse cx="10" cy="16.500" rx="3.600" ry="4.200" fill="#8e8e8e"/><ellipse cx="6" cy="21" rx="2" ry="1.400" fill="#f2f2f2"/><ellipse cx="14" cy="21" rx="2" ry="1.400" fill="#f2f2f2"/><path d="M16.800 5h4M18.800 5v5" stroke="#fff" stroke-width="1.400"/></g>
<g transform="translate(101,260)" ><ellipse cx="18" cy="20.500" rx="8" ry="3" fill="#fff" opacity=".95"/><ellipse cx="9" cy="21.500" rx="9" ry="2.500" fill="#b8b8b8" opacity=".6"/><ellipse cx="11" cy="20" rx="6.500" ry="2.800" fill="#c91818"/><path d="M9 9L7.500 15L10.500 19.500" fill="none" stroke="#a81010" stroke-width="1.700"/><path d="M8 2.500Q14 -1 21.500 2L17.500 10Q12 10.500 7 8z" fill="#e2211c"/><path d="M17.500 10L21.500 2L20 9z" fill="#ffd8c8"/></g>
<g transform="translate(143,258.5)" ><rect width="21" height="25" fill="#17170e"/><rect width="21" height="9.500" fill="#c6c68e"/><rect x="11" y="5" width="10" height="10" fill="#4c5c3c"/><rect x="12" y="0" width="9" height="6" fill="#d4d4a0"/><path d="M1.500 25C1.500 14 2.500 5 7.500 1.500C12.500 4 13.500 13 15 25z" fill="#22130a"/><ellipse cx="7.400" cy="8.600" rx="2.900" ry="4.300" fill="#e8c88e"/><path d="M5.500 7.500h1.300M8.300 7.500h1.300" stroke="#5a3a1a" stroke-width=".8"/><path d="M3.500 22Q5 15.500 7.500 14.500Q10.500 15 12 22z" fill="#ddb070"/><path d="M9.300 21.200L19.700 15.300L27.200 18.800L17.300 29.700L8.300 26.200z" fill="#c86c0a"/><path d="M9.300 21.200L19.700 15.300L27.200 18.800L17.800 27.300z" fill="#f28c1c"/><path d="M8.300 26.200L9.300 21.200L17.800 27.300L17.300 29.700z" fill="#e0a050"/></g>
<path d="M13.500 346.500h190.500" stroke="#a0a0a0"/><path d="M13.500 347.500h191" stroke="#fff"/><rect x="20" y="340.500" width="9.500" height="15" fill="#fff" stroke="#4e4e4e" stroke-width="1.200"/><path d="M224.500 336.500l3 3l-3 3l-3 -3z" fill="#3a4a6a"/><g transform="translate(25,369)" ><path d="M2 17.500L17 11.500" stroke="#b4b4b4" stroke-width="2.200" stroke-linecap="round"/><path d="M3 13L10.500 0.500L13.500 2.500L6 15z" fill="#e1202e"/><path d="M10.500 0.500L13.500 2.500L12.800 3.800L9.700 1.800z" fill="#a01020"/><path d="M3 13L6 15L1.500 18z" fill="#e8c898"/><path d="M1.500 18l1 -2l1 .8z" fill="#222"/></g>
<path d="M49 375.0l4.500 3.500l-4.500 3.500z" fill="#000"/><g transform="translate(63.5,370)" ><ellipse cx="15" cy="17" rx="7.500" ry="2.300" fill="#b4b4b4"/><path d="M8 6.500L19.500 4L21 14Q15 18.500 9.500 15.500z" fill="#98b2ac" stroke="#70908a" stroke-width=".7"/><ellipse cx="13.800" cy="5.300" rx="5.900" ry="2.400" transform="rotate(-12 13.800 5.300)" fill="#d0e2de" stroke="#70908a" stroke-width=".7"/><path d="M1 12C-.5 4 7 -.5 14 3C10.500 5.500 8.500 9 8.500 14C6.500 16.500 2 16 1 12z" fill="#d52a22"/><path d="M3 10C3 6 6 3.500 9 3.500" fill="none" stroke="#f08078" stroke-width="1.200"/></g>
<path d="M91 375.0l4.500 3.500l-4.500 3.500z" fill="#000"/><g transform="translate(107.5,367.5)" ><path d="M8 18.500Q14 15 20 15.500" fill="none" stroke="#b4b4b4" stroke-width="2.400" stroke-linecap="round"/><path d="M9.500 8L3 17.500" stroke="#3848c0" stroke-width="3.600" stroke-linecap="round"/><path d="M9.500 8L3 17.500" stroke="#d4dcf6" stroke-width="2" stroke-linecap="round"/><path d="M2.500 18l-1.200 2" stroke="#3848c0" stroke-width="1.200"/><path d="M6.500 7L12.500 10" stroke="#801030" stroke-width="2.400"/><circle cx="11.500" cy="4.200" r="3.600" fill="#981838"/><circle cx="10.500" cy="3.200" r="1.200" fill="#d06080"/></g>
<g transform="translate(143.5,369)" ><ellipse cx="14" cy="16.500" rx="12" ry="2.500" fill="#b4b4b4"/><path d="M1 9C0 2 8 -1 12 2C14 3.500 12 5.500 14 6C18 3.500 25.500 4 25.500 9.500C25.500 15 17 17.500 10 17C4 16.500 1.500 13 1 9z" fill="#6b4a2e"/><ellipse cx="8.500" cy="6" rx="2" ry="2.500" fill="#e8e0d8"/><circle cx="6" cy="12" r="1.700" fill="#e02020"/><circle cx="10.500" cy="13.500" r="1.700" fill="#f0d020"/><circle cx="15" cy="13.500" r="1.700" fill="#30a830"/><circle cx="19.500" cy="12" r="1.700" fill="#2840d0"/><circle cx="22" cy="8.500" r="1.500" fill="#c8a070"/></g>
<path d="M175 375.0l4.500 3.500l-4.500 3.500z" fill="#000"/><g transform="translate(185,367.5)" ><ellipse cx="16" cy="18.500" rx="12" ry="2" fill="#b8b8b8"/><path d="M16 2C24 2 26 12 21 18" fill="none" stroke="#2838a0" stroke-width="1.500"/><circle cx="16.500" cy="2.500" r="1.500" fill="#2838a0"/><circle cx="21" cy="17.500" r="1.500" fill="#2838a0"/><path d="M5 1Q9 -1 11 2.500Q16 2 17 6.500Q20 10 16.500 13Q15.500 18 11 17Q6 19.500 4 15Q-1 13 1 8.500Q0 3 5 1z" fill="#f5e81c"/><path d="M8.500 6L12 12" stroke="#e0cc00" stroke-width="1.500"/></g>
<g transform="translate(21,433.3)" ><path d="M1.500 11L7 13L10.500 17.500L5.500 17.500z" fill="#a6a6a6"/><path d="M0 0L14.800 7.100L8.800 9.500L16.600 17.200L13.800 19.300L6.300 11.700L3.300 16.500z" fill="#5e5e5e"/></g>
<path d="M62 428v27.500" stroke="#000" stroke-width="2"/><rect x="59.300" y="431.500" width="5.400" height="6" fill="#000"/><path d="M74 452Q80 448 86 451.500" fill="none" stroke="#c2c2c2" stroke-width="3"/><path d="M70.500 435.500V452L82 446z" fill="#000"/><path d="M91.0 426.5h5M92.0 427v3M95.0 427v3M91.0 430.5h5M93.5 431v3" stroke="#000" stroke-width="1.100" fill="none"/><rect x="92.0" y="427" width="3" height="3" fill="#000"/><g transform="translate(114.3,442.2)" ><g fill="none" stroke="#484848" stroke-width="3.800"><path d="M3.500 -11A11.500 11.500 0 0 1 11.500 1.500"/><path d="M-3.500 11A11.500 11.500 0 0 1 -11.500 -1.500"/></g>
<g fill="#484848"><path d="M4.500 -15.500v8l-6.500 -3.500z"/><path d="M-4.500 15.500v-8l6.500 3.500z"/><path d="M7.500 4.500l4 -5l4 5z" transform="rotate(8 11.500 2)" opacity="0"/>
<path d="M0 -8.500L8.500 0L0 8.500L-8.500 0z"/>
<path d="M-13.500 -12.200h5v-1.600l3 2.300l-3 2.300v-1.600h-5zM-6 -7h-5v1.600l-3 -2.300l3 -2.300v1.600h5z"/>
<path d="M8 14v-5h-1.600l2.300 -3l2.300 3h-1.600v5zM13.300 6.500v5h1.600l-2.300 3l-2.300 -3h1.600v-5z"/></g>
<g fill="#fff"><rect x="-3.800" y="-3.800" width="2.400" height="2.400"/><rect x="1.400" y="-3.800" width="2.400" height="2.400"/><rect x="-3.800" y="1.400" width="2.400" height="2.400"/><rect x="1.400" y="1.400" width="2.400" height="2.400"/></g></g>
<path d="M150 449.500Q160 446 172 448.500" fill="none" stroke="#cacaca" stroke-width="2.500"/><rect x="147.500" y="433.500" width="19.500" height="18.500" fill="none" stroke="#3c3c3c" stroke-width="1.900"/><path d="M195 451Q203 447 212 449" fill="none" stroke="#cacaca" stroke-width="2.500"/><circle cx="199.200" cy="442.300" r="9.300" fill="none" stroke="#3c3c3c" stroke-width="1.900"/><path d="M24 487Q32 483 43 484" fill="none" stroke="#cacaca" stroke-width="2.500"/><path d="M30.900 474L21.300 469.900V482L30.100 488.400" fill="none" stroke="#3c3c3c" stroke-width="1.900"/><path d="M30.900 474L39.800 469.100L33.500 481.500" fill="none" stroke="#3c3c3c" stroke-width="1.900"/><path d="M36.500 474.500L32 486L35 482.500L37.500 482z" fill="#3c3c3c"/><path d="M70 487Q78 484 86 485" fill="none" stroke="#cacaca" stroke-width="2.500"/><ellipse cx="72.500" cy="479.600" rx="9.600" ry="7.200" fill="none" stroke="#3c3c3c" stroke-width="1.900"/><path d="M108 486Q116 482 128 484.500" fill="none" stroke="#cacaca" stroke-width="2.500"/><polygon points="114.3,469.5 125.0,477.3 120.9,489.9 107.7,489.9 103.6,477.3" fill="none" stroke="#3c3c3c" stroke-width="1.900"/><path d="M152 486Q160 483 170 484" fill="none" stroke="#cacaca" stroke-width="2.500"/><polygon points="156.2,470.0 158.7,477.0 166.2,477.3 160.3,481.8 162.4,489.0 156.2,484.8 150.0,489.0 152.1,481.8 146.2,477.3 153.7,477.0" fill="none" stroke="#3c3c3c" stroke-width="1.700"/><path d="M192 486Q200 483 210 486" fill="none" stroke="#cacaca" stroke-width="2.500"/><path d="M189.500 473.500A8.700 8.700 0 1 1 206.500 484" fill="none" stroke="#3c3c3c" stroke-width="1.900"/><path d="M217.0 463.5h5M218.0 464v3M221.0 464v3M217.0 467.5h5M219.5 468v3" stroke="#000" stroke-width="1.100" fill="none"/><rect x="218.0" y="464" width="3" height="3" fill="#000"/><g transform="translate(19.5,502.5)" ><path d="M2 17.500h21" stroke="#b8b8b8" stroke-width="2.400"/><path d="M1.500 1.500h21.500v4h-8.500v16h3v2h-10.500v-2h3v-16h-8.500z" fill="#ea9420" stroke="#b86808" stroke-width=".7"/><g fill="#2424a8"><rect x="0" y="0" width="2.400" height="2.400"/><rect x="21.500" y="0" width="2.400" height="2.400"/><rect x="0" y="5" width="2.400" height="2.400"/><rect x="21.500" y="5" width="2.400" height="2.400"/><rect x="6" y="21.500" width="2.400" height="2.400"/><rect x="16.500" y="21.500" width="2.400" height="2.400"/><rect x="11" y="22.500" width="2.400" height="2.400"/></g></g>
<g fill="none" stroke="#b5b5b5" stroke-width="1.300"><path d="M58 514.500l7 -8l9 7.500l-7 8z"/><ellipse cx="78" cy="512" rx="5" ry="7" transform="rotate(35 78 512)"/><path d="M66 521Q76 524 88 518"/></g><ellipse cx="76" cy="517" rx="8" ry="3" fill="#d2d2d2"/><g fill="none" stroke="#b5b5b5" stroke-width="1.300"><path d="M102 514.500l8 -9l9 8.500l-8 8.500z"/><path d="M119 514Q126 512 126 518Q124 523 113 523"/></g><ellipse cx="118" cy="519" rx="7" ry="2.500" fill="#d6d6d6"/><circle cx="110" cy="505.500" r="1.200" fill="#999"/><circle cx="119" cy="514" r="1.200" fill="#999"/><path d="M133.0 500.5h5M134.0 501v3M137.0 501v3M133.0 504.5h5M135.5 505v3" stroke="#000" stroke-width="1.100" fill="none"/><rect x="134.0" y="501" width="3" height="3" fill="#000"/><g transform="translate(143,504.5)" ><path d="M14 16L27 19.500L26 21.500L12 19z" fill="#e8d870"/><path d="M16 18l9 2.500" stroke="#fff" stroke-width="1"/><path d="M24 17l3.500 1v3.500l-3 -1z" fill="#c0c0c0"/><path d="M1 4Q2 0 7 .5L15 2Q18.500 3 18.500 8V14Q18 17.500 14 17.500L4 16Q0 15 .5 10z" fill="#f2c41e"/><path d="M2.500 6Q3.500 3 7 3.500L13 4.500Q15.500 5.500 15.500 9.500Q15 14 12 14L5 13Q2 12 2.500 6z" fill="#2c3488"/><path d="M3 9.500Q8 7 15.500 10.500" fill="none" stroke="#e8e8f8" stroke-width="1.600"/></g>
<g transform="translate(185.5,501)" ><rect x="0" y="0" width="26" height="25.500" rx="3" fill="#b4e4b4"/><rect x="1" y="1" width="24" height="23.500" rx="2.500" fill="#1b8c1b"/><path d="M10 4.500h6v5.500h5.500v6h-5.500v5.500h-6v-5.500h-5.500v-6h5.500z" fill="#1b8c1b" stroke="#c4efc4" stroke-width="1.300"/></g>
<g transform="translate(17,536)" clip-path="url(#cABC)"><rect width="29" height="29" fill="url(#lgABC)"/><g fill="#0c3c0c"><circle cx="5" cy="4.500" r="2.300"/><rect x="10" y="2" width="4" height="5"/><path d="M16 7l4 -5l4 5z"/><circle cx="5" cy="22.500" r="2.300"/><rect x="10" y="20" width="4" height="5"/><path d="M16 25l4 -5l4 5z"/><circle cx="30" cy="4.500" r="2.300" /></g><path d="M0 17.500h29M25.500 0v29" stroke="#0c3c0c" stroke-width="1"/><text x="1.500" y="15.500" font-family="Liberation Sans,sans-serif" font-size="9.500" fill="#0c3c0c" textLength="22" lengthAdjust="spacingAndGlyphs">ABC</text><text x="1.500" y="33" font-family="Liberation Sans,sans-serif" font-size="9.500" fill="#0c3c0c" textLength="22" lengthAdjust="spacingAndGlyphs">ABC</text><text x="27" y="15.500" font-family="Liberation Sans,sans-serif" font-size="9.500" fill="#0c3c0c">B</text></g>
<clipPath id="cABC"><rect width="29" height="29"/></clipPath><g transform="translate(60,537)" ><g fill="none" stroke="#9c9c9c" stroke-width="1.200"><path d="M0 0Q13.500 4 27 0Q23 13 27 26Q13.500 22 0 26Q4 13 0 0z"/><path d="M6 1.500Q9 13 6 24.500M13.500 2V24M21 1.500Q18 13 21 24.500M1.500 6.500Q13.500 9 25.500 6.500M2 13H25M1.500 19.500Q13.500 17 25.500 19.500"/><ellipse cx="13.500" cy="13" rx="7" ry="8.500" stroke-width="2" stroke="#b4b4b4"/></g></g>
<g transform="translate(100,539)" ><g fill="none" stroke="#a8a8a8" stroke-width="1.500"><rect x="1" y="14" width="4.500" height="4.500"/><rect x="8.500" y="14" width="4.500" height="4.500"/><rect x="8.500" y="21" width="4.500" height="4.500"/><circle cx="15" cy="3" r="2.400"/><circle cx="27" cy="3" r="2.400"/><circle cx="15" cy="10" r="2.400"/><circle cx="27" cy="10" r="2.400"/><circle cx="21" cy="14" r="2.400"/></g><circle cx="21" cy="7" r=".9" fill="#a8a8a8"/></g>
<g transform="translate(144.5,537.5)" ><rect x="1.500" y="1" width="3" height="3" fill="#fff" stroke="#000" stroke-width="1"/><path d="M3 20L9 13L15 18L18 22L22.500 17" fill="none" stroke="#111" stroke-width="1.700"/><g fill="#ecec70" stroke="#8a8a20" stroke-width=".6"><circle cx="3" cy="20" r="2.700"/><circle cx="9" cy="13" r="2.700"/><circle cx="15" cy="18" r="2.700"/><circle cx="22.500" cy="17" r="2.700"/></g><g stroke="#111" stroke-width=".9"><path d="M1.500 20h3M3 18.500v3M7.500 13h3M9 11.500v3M13.500 18h3M15 16.500v3M21 17h3M22.500 15.500v3"/></g></g>
<g fill="none" stroke="#a8a8a8" stroke-width="1.300"><path d="M186 550l9 -8l8 8l9 -6"/></g><g fill="none" stroke="#cfcfcf" stroke-width="1.200" stroke-dasharray="2 1.500"><path d="M187 558l8 -5l8 5l8 -4M189 562l6 -3l8 3l6 -2M195 544v8"/></g><g fill="none" stroke="#a4a4a4"><path d="M17 572Q32 585 17 598.500" stroke-width="2.200"/><path d="M32 577Q40 585 32 594" stroke="#d8d8d8" stroke-dasharray="2 1.500"/><path d="M28 585.500h11M26 575l5 2M26 596l5 -2" stroke-width="1"/></g><g fill="#a4a4a4"><rect x="15.500" y="570.500" width="3" height="3"/><rect x="15.500" y="597" width="3" height="3"/><rect x="34" y="570.500" width="3" height="3"/><rect x="34" y="597" width="3" height="3"/><rect x="29" y="575" width="2.500" height="2.500"/><rect x="29" y="593" width="2.500" height="2.500"/></g><rect x="42" y="584" width="3" height="3" fill="#fff" stroke="#a4a4a4" stroke-width=".8"/><path d="M58.500 572.500L87 584.500L58.500 598.500" fill="none" stroke="#5a5a5a" stroke-width="1.800"/><path d="M58.500 572.500L75 579.500M58.500 598.500L75 590.500" stroke="#f2f2a8" stroke-width="2.600"/><path d="M58.500 572.500L66 575.700M58.500 598.500L66 594.800" stroke="#000" stroke-width="2.800"/><path d="M107 594L124 577" stroke="#f2f2a8" stroke-width="2.600"/><g stroke="#000" stroke-width="3" fill="none"><path d="M118.500 571l11.500 10M124.500 576.500l4.500 -4.500"/><path d="M99.500 589l11.500 10M105 594.500l-4.500 4.500"/></g><g fill="none" stroke="#000" stroke-width="1.300"><circle cx="122.500" cy="590" r="2"/><circle cx="125" cy="594.500" r="2"/><path d="M120.500 589L113 584.500M123.500 593L114 588"/></g><path d="M112 583.500l8 3.500l-7 1z" fill="#fff" stroke="#000" stroke-width=".8"/><g transform="translate(143,574)" ><ellipse cx="14" cy="21.500" rx="13" ry="3.500" fill="#a8a8a8"/><path d="M1.500 5Q1 17 5 21Q14 24.500 23 21Q27 17 26.500 5z" fill="url(#lgBowl)"/><ellipse cx="14" cy="5" rx="12.500" ry="4" fill="#b0b0e4" stroke="#6c6c78" stroke-width="1.500"/><path d="M2 14Q8 10 14 9.500Q20 10 26 14" fill="none" stroke="#e6e690" stroke-width="1.300"/><path d="M5 6.500Q9 13 8 20M23 6.500Q19 13 20 20" fill="none" stroke="#8484c0" stroke-width="1"/></g>
<g fill="none" stroke="#b0b0b0" stroke-width="1.300"><path d="M198 573Q190 582 188 592M196 582l6 4"/><path d="M199 572.500h8M186.500 590l2.500 6l2 -5" stroke-width="1"/></g><g fill="none" stroke="#dadada" stroke-dasharray="2 1.500"><path d="M201 588Q206 582 209 574"/></g><g fill="none" stroke="#9c9c9c" stroke-width="1.200"><path d="M28 612Q21 614 23 621Q20 626 21 633h8.500"/><path d="M29.500 610v26" stroke-dasharray="4 1.500"/><path d="M22 633l7 -9" stroke-width="1"/></g><path d="M33 618Q38 624 33 631" fill="none" stroke="#e2e2e2" stroke-width="1.300"/><g transform="translate(58,608)" ><path d="M22 24l7 -2l-2 6h-7z" fill="#b8b8b8" opacity=".6"/><path d="M1 6Q1 3 4 3H12L14 6H24Q27 6 27 9V16H1z" fill="#e6d400"/><path d="M0 27L1.500 14Q5 16 10 15.500L29.500 13.500L27 25Q26.500 28.500 23 28.500H2Q0 28.500 0 27z" fill="url(#lgFold)"/><polygon points="16.9,0.3 17.6,6.9 24.0,8.9 17.9,11.6 18.0,18.3 13.5,13.4 7.2,15.6 10.5,9.8 6.5,4.4 13.0,5.8" fill="#f7ea20" stroke="#2e2e10" stroke-width="1.500"/></g>
<g fill="none" stroke="#8c8c8c" stroke-width="1.300"><path d="M16.500 673v26" stroke-dasharray="3 1.500"/><rect x="28.500" y="680.500" width="10.500" height="10"/><path d="M19.500 686h7"/></g><path d="M18.500 686l3.500 -2.500v5z" fill="#8c8c8c"/><path d="M20 691h22" stroke="#d4d4d4" stroke-width="1.600"/><g fill="none" stroke="#8c8c8c" stroke-width="1.300"><path d="M83.500 673v26" stroke-dasharray="3 1.500"/><rect x="60.500" y="680.500" width="10.500" height="10"/><path d="M73 686h7"/></g><path d="M81.500 686l-3.500 -2.500v5z" fill="#8c8c8c"/><path d="M62 691h22" stroke="#d4d4d4" stroke-width="1.600"/><g fill="none" stroke="#8c8c8c" stroke-width="1.300"><path d="M101.500 674.500h26" stroke-dasharray="3 1.500"/><rect x="109.500" y="687.500" width="10.500" height="10"/><path d="M114.800 679v6.500"/></g><path d="M114.800 677l-2.700 3.500h5.400z" fill="#8c8c8c"/><path d="M107 692h20" stroke="#d4d4d4" stroke-width="1.600"/><g fill="none" stroke="#8c8c8c" stroke-width="1.300"><path d="M142.500 698.500h26" stroke-dasharray="3 1.500"/><rect x="149.500" y="674.500" width="10.500" height="10"/><path d="M154.800 687v6.500"/></g><path d="M154.800 696l-2.700 -3.500h5.400z" fill="#8c8c8c"/><path d="M156 690h12" stroke="#d4d4d4" stroke-width="2.500"/><g fill="none" stroke="#8c8c8c" stroke-width="1.300"><path d="M184.500 673v26M209.500 673v26" stroke-dasharray="3 1.500"/><rect x="191.500" y="680.500" width="10.500" height="10"/></g><path d="M186 686l3 -2.500v5zM208 686l-3 -2.500v5z" fill="#8c8c8c"/><path d="M188 693h20" stroke="#d4d4d4" stroke-width="1.600"/><g fill="none" stroke="#8c8c8c" stroke-width="1.300"><path d="M16.500 709.500h26" stroke-dasharray="3 1.500"/><rect x="24.500" y="716.500" width="10.500" height="10"/><path d="M58.500 709.500h26v12M58.500 709.500v12" stroke-dasharray="3 1.500"/><rect x="66.500" y="716.500" width="10.500" height="10"/><path d="M102.500 712v9M124.500 712v9" stroke-dasharray="1 1.500"/><rect x="109.500" y="716.500" width="9" height="10"/><path d="M113.800 711v4"/></g><path d="M29.800 710.500l-2.700 3h5.400zM71.800 710.500l-2.700 3h5.400zM113.800 708.500l-2.200 2.700h4.400z" fill="#8c8c8c"/><path d="M132.5 707.5h5M133.5 708v3M136.5 708v3M132.5 711.5h5M135 712v3" stroke="#000" stroke-width="1.100" fill="none"/><rect x="133.5" y="708" width="3" height="3" fill="#000"/><text font-family="Liberation Sans,sans-serif" font-size="6" font-weight="bold" fill="#000"><tspan x="145" y="721" rotate="-60">*</tspan><tspan x="148" y="716" rotate="-30">a</tspan><tspan x="153" y="714" rotate="-5">a</tspan><tspan x="160" y="715" rotate="25">*</tspan><tspan x="165" y="719" rotate="55">c</tspan></text><text x="185.500" y="719.500" font-family="Liberation Sans,sans-serif" font-size="14" font-weight="bold" fill="#000" textLength="26" lengthAdjust="spacingAndGlyphs">Nes</text><text x="185.500" y="729" font-family="Liberation Sans,sans-serif" font-size="14" font-weight="bold" fill="#000" textLength="26" lengthAdjust="spacingAndGlyphs">Nes</text></svg>
<div class="a" style="left:0;top:721px;width:270px;height:26px;background:#f0f0f0"></div>
<svg style="left:0;top:721px" width="270" height="27" viewBox="0 0 270 27">
<defs><filter id="nz" x="0" y="0" width="100%" height="100%"><feTurbulence type="fractalNoise" baseFrequency=".28" numOctaves="2" seed="3"/><feColorMatrix type="matrix" values="0 0 0 0 .95  0 0 0 0 .95  0 0 0 0 .95  1.6 1.6 0 0 -1.1"/></filter></defs>
<rect x="126" y="0" width="144" height="25" fill="#cbcbcb"/><rect x="126" y="0" width="144" height="25" fill="#e6e6e6" filter="url(#nz)"/>
<path d="M0 .5h62.500" stroke="#f0f0f0"/><path d="M62.500 .5H128V21Q128 24.500 124.500 24.500H66Q62.500 24.500 61.500 21z" fill="#f5f5f5" stroke="#a6a6a6"/>
<path d="M0 24.500H58Q61 24.500 62 21L62.500 1" fill="none" stroke="#fff"/>
<path d="M0 26.500H270" stroke="#a0a0a0"/>
</svg>
<div class="t" style="left:8px;top:726px;font-size:11.600px">Assistant</div><div class="t" style="left:70px;top:727px;letter-spacing:.2px">Toolpaths</div>

<!-- p_right -->
<div class="rh" style="top:45px">Vectors<i></i></div><div class="dd" style="top:61px">Default Sheet<i></i></div>
<div class="row" style="top:112px;height:26px"></div><div class="t" style="left:1128px;top:119px">Default Layer</div>
<div class="rh" style="top:172px">Bitmaps<i></i></div>
<div class="row" style="top:213px;height:24px"></div><div class="t" style="left:1128px;top:219px">Bitmap Layer 1</div>
<div class="rh" style="top:253px">Reliefs<i></i></div><div class="dd" style="top:269px;height:22px;padding-top:1.500px">Front Relief<i style="height:19px"></i></div>
<div class="row" style="top:321px;height:25px"></div><div class="t" style="left:1149px;top:327px">Relief Layer 1</div>
<svg style="left:0;top:0" width="1366" height="768" viewBox="0 0 1366 768"><defs><linearGradient id="rPage" x1="0" y1="0" x2=".6" y2="1"><stop offset="0" stop-color="#d6e0ee"/><stop offset="1" stop-color="#7b93b3"/></linearGradient>
<linearGradient id="rLbl" x1="0" y1="0" x2="0" y2="1"><stop offset="0" stop-color="#f6f6f6"/><stop offset="1" stop-color="#b5b5b5"/></linearGradient>
<linearGradient id="rFold" x1="0" y1="0" x2="0" y2="1"><stop offset="0" stop-color="#fff040"/><stop offset="1" stop-color="#d8c400"/></linearGradient>
<linearGradient id="rGray" x1="0" y1="0" x2="1" y2="1"><stop offset="0" stop-color="#6a6a6a"/><stop offset="1" stop-color="#f4f4f4"/></linearGradient>
</defs><g transform="translate(1103.5,90.5)" ><g transform="translate(0,.5) scale(.95,.97)"><path d="M12 9h4l-2.500 7h-3z" fill="#a8a8a8" opacity=".6"/><path d="M0 1Q0 0 1 0H6.500L11.500 5V15Q11.500 16 10.500 16H1Q0 16 0 15z" fill="url(#rPage)"/><path d="M6.500 0V5H11.500z" fill="#f2f6fb"/></g></g>
<g transform="translate(1139,91)" ><g transform="translate(0,1.800) scale(.97,.82)"><path d="M.5 3Q.5 1 2 1H6L7.500 3H12.500Q13.500 3 13.500 4V7H.5z" fill="#e6d400"/><path d="M0 14.500L1 6Q3 7 6 6.500L17 5.500L15 13.500Q14.500 15.500 13 15.500H1Q0 15.500 0 14.500z" fill="url(#rFold)"/></g></g>
<g transform="translate(1176.5,91)" ><g transform="translate(0,1) scale(1,.88)"><path d="M14.500 9h3l-2 6h-2z" fill="#a8a8a8" opacity=".6"/><rect width="14.500" height="15" rx="1" fill="#2157c4"/><rect x="2.500" y="1" width="9.500" height="7" fill="url(#rLbl)"/><rect x="3.500" y="10" width="7.500" height="5" fill="#bfcadc"/><rect x="5" y="11" width="2.300" height="3.500" fill="#2157c4"/></g></g>
<g transform="translate(1213,90.5)" ><path d="M2 0h8l1 3l2 1v4l2 2v6H5l-1 -3l-2 -1v-5l-1 -2z" fill="#c9a070"/><path d="M0 2h8l1 3l2 1v4l2 2v3H4l-1 -2l-2 -1V7l-1 -2z" fill="#b48c5c" opacity=".75"/><path d="M1 4h1M1 7h1M1 10h1M2 13h1" stroke="#8a6a40" stroke-width="1"/></g>
<g transform="translate(1251.5,90)" ><rect width="12.500" height="17" fill="#8c98a8"/><path d="M8 0h4.500v4.500z" fill="#dfe4ea"/><g transform="translate(6.2,9.5) scale(0.95)"><path d="M-2 3.500h4v4h-4z" fill="#7a2c0a"/><path d="M-1.700 6.500h3.400v2.200h-3.400z" fill="#1a0a02"/><path d="M0 -7A5.200 5.200 0 0 1 3.200 2.200L2.200 4h-4.400L-3.200 2.200A5.200 5.200 0 0 1 0 -7z" fill="#ffe060" stroke="#e8b020" stroke-width=".8"/><ellipse cx="-1" cy="-3" rx="2" ry="2.500" fill="#fff8c0"/></g></g>
<g transform="translate(1289.5,91)" ><path d="M1 3.500h9.500l-1 10q-.2 1.500 -1.700 1.500h-4q-1.500 0 -1.700 -1.500z" fill="#3f86d8"/><ellipse cx="5.800" cy="3.500" rx="5.300" ry="2.300" fill="#8fc0f0" stroke="#2e6cc0" stroke-width=".8"/><path d="M3 7v5" stroke="#9ccaf4" stroke-width="1.400"/></g>
<g transform="translate(1322.5,89.5)" ><rect x=".5" y=".5" width="17" height="17" fill="#f4f4f4" stroke="#c8c8c8"/><g transform="translate(6,9) scale(0.82)"><path d="M-2 3.500h4v4h-4z" fill="#7a2c0a"/><path d="M-1.700 6.500h3.400v2.200h-3.400z" fill="#1a0a02"/><path d="M0 -7A5.200 5.200 0 0 1 3.200 2.200L2.200 4h-4.400L-3.200 2.200A5.200 5.200 0 0 1 0 -7z" fill="#ffe060" stroke="#e8b020" stroke-width=".8"/><ellipse cx="-1" cy="-3" rx="2" ry="2.500" fill="#fff8c0"/></g><g transform="translate(12,8) scale(0.82)"><path d="M-2 3.500h4v4h-4z" fill="#7a2c0a"/><path d="M-1.700 6.500h3.400v2.200h-3.400z" fill="#1a0a02"/><path d="M0 -7A5.200 5.200 0 0 1 3.200 2.200L2.200 4h-4.400L-3.200 2.200A5.200 5.200 0 0 1 0 -7z" fill="#ffe060" stroke="#e8b020" stroke-width=".8"/><ellipse cx="-1" cy="-3" rx="2" ry="2.500" fill="#fff8c0"/></g></g>
<rect x="1105.500" y="116.500" width="18" height="17" fill="#e6e6e6" stroke="#fff"/><path d="M1106 134h18v-17.500" fill="none" stroke="#a8a8a8"/><circle cx="1114.500" cy="125" r="6.300" fill="#000"/><rect x="1287" y="116.500" width="17" height="17" fill="#b4b4b4" stroke="#e8e8e8"/><path d="M1293 125a3 3 0 1 1 6 0v3h-6z" fill="#d8d8d8" stroke="#8a8a8a" stroke-width=".8"/><path d="M1296 131.500v-4M1294 129l2 -2l2 2" fill="none" stroke="#111" stroke-width="1.200"/><rect x="1305.500" y="116.500" width="17" height="17" fill="#e8e8e8"/><path d="M1306.500 117v15.500h15" fill="none" stroke="#000" stroke-dasharray="2 1.500"/><path d="M1320 119.500l-7 7" stroke="#000" stroke-width="2.800"/><path d="M1309 130.500l1.800 -8l6.200 6.200z" fill="#000"/><rect x="1323.500" y="116.500" width="17" height="17" fill="#e4e4e4" stroke="#f8f8f8"/><g transform="translate(1332,125) scale(0.92)"><path d="M-2 3.500h4v4h-4z" fill="#7a2c0a"/><path d="M-1.700 6.500h3.400v2.200h-3.400z" fill="#1a0a02"/><path d="M0 -7A5.200 5.200 0 0 1 3.200 2.200L2.200 4h-4.400L-3.200 2.200A5.200 5.200 0 0 1 0 -7z" fill="#ffe060" stroke="#e8b020" stroke-width=".8"/><ellipse cx="-1" cy="-3" rx="2" ry="2.500" fill="#fff8c0"/></g><g><rect x="1312" y="141" width="12" height="12" rx="1.500" fill="#123c8e"/><path d="M1318 151 v-7M1314.700 146.8 l3.300 -3.300l3.300 3.300" fill="none" stroke="#fff" stroke-width="1.700"/><rect x="1330" y="141" width="12" height="12" rx="1.500" fill="#123c8e"/><path d="M1336 143 v7M1332.700 147.2 l3.300 3.300l3.300 -3.300" fill="none" stroke="#fff" stroke-width="1.700"/></g><g transform="translate(1103.5,192)" ><g transform="translate(0,.5) scale(.95,.97)"><path d="M12 9h4l-2.500 7h-3z" fill="#a8a8a8" opacity=".6"/><path d="M0 1Q0 0 1 0H6.500L11.500 5V15Q11.500 16 10.500 16H1Q0 16 0 15z" fill="url(#rPage)"/><path d="M6.500 0V5H11.500z" fill="#f2f6fb"/></g></g>
<g transform="translate(1135,192.5)" ><g transform="translate(0,1.800) scale(.97,.82)"><path d="M.5 3Q.5 1 2 1H6L7.500 3H12.500Q13.500 3 13.500 4V7H.5z" fill="#e6d400"/><path d="M0 14.500L1 6Q3 7 6 6.500L17 5.500L15 13.500Q14.500 15.500 13 15.500H1Q0 15.500 0 14.500z" fill="url(#rFold)"/></g></g>
<g transform="translate(1165.5,192.5)" ><g transform="translate(0,1) scale(1,.88)"><path d="M14.500 9h3l-2 6h-2z" fill="#a8a8a8" opacity=".6"/><rect width="14.500" height="15" rx="1" fill="#2157c4"/><rect x="2.500" y="1" width="9.500" height="7" fill="url(#rLbl)"/><rect x="3.500" y="10" width="7.500" height="5" fill="#bfcadc"/><rect x="5" y="11" width="2.300" height="3.500" fill="#2157c4"/></g></g>
<g transform="translate(1198,192)" ><path d="M2 0h8l1 3l2 1v4l2 2v6H5l-1 -3l-2 -1v-5l-1 -2z" fill="#c9a070"/><path d="M0 2h8l1 3l2 1v4l2 2v3H4l-1 -2l-2 -1V7l-1 -2z" fill="#b48c5c" opacity=".75"/><path d="M1 4h1M1 7h1M1 10h1M2 13h1" stroke="#8a6a40" stroke-width="1"/></g>
<g transform="translate(1229.5,192)" ><path d="M14 8h3l-2 7h-3z" fill="#a8a8a8" opacity=".6"/><rect width="14" height="14" fill="url(#rGray)"/></g>
<g transform="translate(1260.5,191.5)" ><g transform="scale(.55,.56)"><rect width="21" height="25" fill="#17170e"/><rect width="21" height="9.500" fill="#c6c68e"/><rect x="11" y="5" width="10" height="10" fill="#4c5c3c"/><rect x="12" y="0" width="9" height="6" fill="#d4d4a0"/><path d="M1.500 25C1.500 14 2.500 5 7.500 1.500C12.500 4 13.500 13 15 25z" fill="#22130a"/><ellipse cx="7.400" cy="8.600" rx="2.900" ry="4.300" fill="#e8c88e"/><path d="M5.500 7.500h1.300M8.300 7.500h1.300" stroke="#5a3a1a" stroke-width=".8"/><path d="M3.500 22Q5 15.500 7.500 14.500Q10.500 15 12 22z" fill="#ddb070"/></g><rect x="6.500" y="7.500" width="10.500" height="7.500" fill="#7080d0" opacity=".9"/></g>
<g transform="translate(1294,192.5)" ><path d="M1 3.500h9.500l-1 10q-.2 1.500 -1.700 1.500h-4q-1.500 0 -1.700 -1.500z" fill="#3f86d8"/><ellipse cx="5.800" cy="3.500" rx="5.300" ry="2.300" fill="#8fc0f0" stroke="#2e6cc0" stroke-width=".8"/><path d="M3 7v5" stroke="#9ccaf4" stroke-width="1.400"/></g>
<g transform="translate(1322.5,190.5)" ><rect x=".5" y=".5" width="17" height="17" fill="#f4f4f4" stroke="#c8c8c8"/><g transform="translate(6,9) scale(0.82)"><path d="M-2 3.500h4v4h-4z" fill="#7a2c0a"/><path d="M-1.700 6.500h3.400v2.200h-3.400z" fill="#1a0a02"/><path d="M0 -7A5.200 5.200 0 0 1 3.200 2.200L2.200 4h-4.400L-3.200 2.200A5.200 5.200 0 0 1 0 -7z" fill="#ffe060" stroke="#e8b020" stroke-width=".8"/><ellipse cx="-1" cy="-3" rx="2" ry="2.500" fill="#fff8c0"/></g><g transform="translate(12,8) scale(0.82)"><path d="M-2 3.500h4v4h-4z" fill="#7a2c0a"/><path d="M-1.700 6.500h3.400v2.200h-3.400z" fill="#1a0a02"/><path d="M0 -7A5.200 5.200 0 0 1 3.200 2.200L2.200 4h-4.400L-3.200 2.200A5.200 5.200 0 0 1 0 -7z" fill="#ffe060" stroke="#e8b020" stroke-width=".8"/><ellipse cx="-1" cy="-3" rx="2" ry="2.500" fill="#fff8c0"/></g></g>
<g transform="translate(1106,216.5)" ><g transform="scale(.77,.68)"><rect width="21" height="25" fill="#17170e"/><rect width="21" height="9.500" fill="#c6c68e"/><rect x="11" y="5" width="10" height="10" fill="#4c5c3c"/><rect x="12" y="0" width="9" height="6" fill="#d4d4a0"/><path d="M1.500 25C1.500 14 2.500 5 7.500 1.500C12.500 4 13.500 13 15 25z" fill="#22130a"/><ellipse cx="7.400" cy="8.600" rx="2.900" ry="4.300" fill="#e8c88e"/><path d="M5.500 7.500h1.300M8.300 7.500h1.300" stroke="#5a3a1a" stroke-width=".8"/><path d="M3.500 22Q5 15.500 7.500 14.500Q10.500 15 12 22z" fill="#ddb070"/></g></g>
<g transform="translate(1103.5,299)" ><g transform="translate(0,.5) scale(.95,.97)"><path d="M12 9h4l-2.500 7h-3z" fill="#a8a8a8" opacity=".6"/><path d="M0 1Q0 0 1 0H6.500L11.500 5V15Q11.500 16 10.500 16H1Q0 16 0 15z" fill="url(#rPage)"/><path d="M6.500 0V5H11.500z" fill="#f2f6fb"/></g></g>
<g transform="translate(1129,299.5)" ><g transform="translate(0,1.800) scale(.97,.82)"><path d="M.5 3Q.5 1 2 1H6L7.500 3H12.500Q13.500 3 13.500 4V7H.5z" fill="#e6d400"/><path d="M0 14.500L1 6Q3 7 6 6.500L17 5.500L15 13.500Q14.500 15.500 13 15.500H1Q0 15.500 0 14.500z" fill="url(#rFold)"/></g></g>
<g transform="translate(1157.5,299.5)" ><g transform="translate(0,1) scale(1,.88)"><path d="M14.500 9h3l-2 6h-2z" fill="#a8a8a8" opacity=".6"/><rect width="14.500" height="15" rx="1" fill="#2157c4"/><rect x="2.500" y="1" width="9.500" height="7" fill="url(#rLbl)"/><rect x="3.500" y="10" width="7.500" height="5" fill="#bfcadc"/><rect x="5" y="11" width="2.300" height="3.500" fill="#2157c4"/></g></g>
<g transform="translate(1185.5,298.5)" ><path d="M2 0h8l1 3l2 1v4l2 2v6H5l-1 -3l-2 -1v-5l-1 -2z" fill="#c9a070"/><path d="M0 2h8l1 3l2 1v4l2 2v3H4l-1 -2l-2 -1V7l-1 -2z" fill="#b48c5c" opacity=".75"/><path d="M1 4h1M1 7h1M1 10h1M2 13h1" stroke="#8a6a40" stroke-width="1"/></g>
<g transform="translate(1212.5,298.5)" ><path d="M0 12l8 -4l9 4l-8 5z" fill="#c81818"/><path d="M5 12.500l3.500 -2l3.500 2l-3.500 2z" fill="#ffe8a0"/><path d="M1 5l8 -4.500l9 4.500l-8 5z" fill="#7a78e0" opacity=".92"/></g>
<g transform="translate(1242,298)" ><rect width="13" height="17" fill="#8c98a8"/><path d="M8 0h5v5z" fill="#eef0f4"/><g transform="translate(6.5,9.5) scale(0.95)"><path d="M-2 3.500h4v4h-4z" fill="#7a2c0a"/><path d="M-1.700 6.500h3.400v2.200h-3.400z" fill="#1a0a02"/><path d="M0 -7A5.200 5.200 0 0 1 3.200 2.200L2.200 4h-4.400L-3.200 2.200A5.200 5.200 0 0 1 0 -7z" fill="#ffe060" stroke="#e8b020" stroke-width=".8"/><ellipse cx="-1" cy="-3" rx="2" ry="2.500" fill="#fff8c0"/></g></g>
<g transform="translate(1270,299)" ><rect width="14.500" height="15.500" fill="#0a0a0a"/><circle cx="4.500" cy="3.200" r="1.500" fill="#a8a8a8"/><circle cx="10" cy="3.200" r="1.500" fill="#a8a8a8"/><circle cx="7.200" cy="5.200" r="3.200" fill="#c4c4c4"/><ellipse cx="7.200" cy="10.700" rx="5" ry="4.300" fill="#c8c8c8"/><ellipse cx="7.200" cy="11" rx="2.500" ry="2.400" fill="#8c8c8c"/></g>
<g transform="translate(1298.5,299.5)" ><path d="M1 3.500h9.500l-1 10q-.2 1.500 -1.700 1.500h-4q-1.500 0 -1.700 -1.500z" fill="#3f86d8"/><ellipse cx="5.800" cy="3.500" rx="5.300" ry="2.300" fill="#8fc0f0" stroke="#2e6cc0" stroke-width=".8"/><path d="M3 7v5" stroke="#9ccaf4" stroke-width="1.400"/></g>
<g transform="translate(1322.5,297.5)" ><rect x=".5" y=".5" width="17" height="17" fill="#f4f4f4" stroke="#c8c8c8"/><g transform="translate(6,9) scale(0.82)"><path d="M-2 3.500h4v4h-4z" fill="#7a2c0a"/><path d="M-1.700 6.500h3.400v2.200h-3.400z" fill="#1a0a02"/><path d="M0 -7A5.200 5.200 0 0 1 3.200 2.200L2.200 4h-4.400L-3.200 2.200A5.200 5.200 0 0 1 0 -7z" fill="#ffe060" stroke="#e8b020" stroke-width=".8"/><ellipse cx="-1" cy="-3" rx="2" ry="2.500" fill="#fff8c0"/></g><g transform="translate(12,8) scale(0.82)"><path d="M-2 3.500h4v4h-4z" fill="#7a2c0a"/><path d="M-1.700 6.500h3.400v2.200h-3.400z" fill="#1a0a02"/><path d="M0 -7A5.200 5.200 0 0 1 3.200 2.200L2.200 4h-4.400L-3.200 2.200A5.200 5.200 0 0 1 0 -7z" fill="#ffe060" stroke="#e8b020" stroke-width=".8"/><ellipse cx="-1" cy="-3" rx="2" ry="2.500" fill="#fff8c0"/></g></g>
<g transform="translate(1110,324)" ><path d="M2 12Q3 2 12 1.500Q21 2 22.500 13l-4.500 1.500Q17 6.500 11.500 6.500Q6.500 7 6 13.500z" fill="#d8c050" stroke="#a89030" stroke-width=".7"/><path d="M6 13.500Q6.500 7 11.500 6.500Q17 6.500 18 14.500Q12 17 6 13.500z" fill="#8a80c8"/><path d="M1.500 16.500h7M5 13v7" stroke="#000" stroke-width="1.200"/></g>
<path d="M1138.500 329.500l4 3.500l-4 3.500z" fill="#000"/><rect x="1323.500" y="324.500" width="17" height="17" fill="#e8e8e8" stroke="#f8f8f8"/><g transform="translate(1332,333) scale(0.92)"><path d="M-2 3.500h4v4h-4z" fill="#7a2c0a"/><path d="M-1.700 6.500h3.400v2.200h-3.400z" fill="#1a0a02"/><path d="M0 -7A5.200 5.200 0 0 1 3.200 2.200L2.200 4h-4.400L-3.200 2.200A5.200 5.200 0 0 1 0 -7z" fill="#ffe060" stroke="#e8b020" stroke-width=".8"/><ellipse cx="-1" cy="-3" rx="2" ry="2.500" fill="#fff8c0"/></g><g><rect x="1312" y="350" width="12" height="12" rx="1.500" fill="#123c8e"/><path d="M1318 360 v-7M1314.700 355.8 l3.300 -3.300l3.300 3.300" fill="none" stroke="#fff" stroke-width="1.700"/><rect x="1330" y="350" width="12" height="12" rx="1.500" fill="#123c8e"/><path d="M1336 352 v7M1332.700 356.2 l3.300 3.300l3.300 -3.300" fill="none" stroke="#fff" stroke-width="1.700"/></g></svg>
<svg style="left:1094px;top:721px" width="272" height="27" viewBox="0 0 272 27">
<defs><filter id="nz2" x="0" y="0" width="100%" height="100%"><feTurbulence type="fractalNoise" baseFrequency=".28" numOctaves="2" seed="8"/><feColorMatrix type="matrix" values="0 0 0 0 .95  0 0 0 0 .95  0 0 0 0 .95  1.6 1.6 0 0 -1.1"/></filter></defs>
<rect x="96" y="0" width="176" height="25" fill="#cbcbcb"/><rect x="96" y="0" width="176" height="25" fill="#e6e6e6" filter="url(#nz2)"/>
<path d="M49 .5H272" stroke="#a6a6a6"/>
<path d="M49.500 .5H97.500V21Q97.500 24.500 94 24.500H53Q49.500 24.500 48.500 21z" fill="#f5f5f5" stroke="#a6a6a6"/>
<path d="M1 24.500H45Q48 24.500 49 21L49.500 1" fill="none" stroke="#fff"/>
<path d="M0 26.500H272" stroke="#a0a0a0"/>
</svg>
<div class="t" style="left:1103.500px;top:726px;font-size:11.500px;letter-spacing:-.35px">Layers</div><div class="t" style="left:1151px;top:727px;letter-spacing:.2px">Add In</div>

<!-- p_status -->
<div class="sb" style="left:1023px;width:65px">X: -120.782</div>
<div class="sb" style="left:1092px;width:66px">Y: 559.149</div>
<div class="sb" style="left:1161px;width:59px">Z: 0.000</div>
<div class="sb" style="left:1224px;width:69px"></div>
<div class="sb" style="left:1297px;width:69px"></div>

</body>
</html>
